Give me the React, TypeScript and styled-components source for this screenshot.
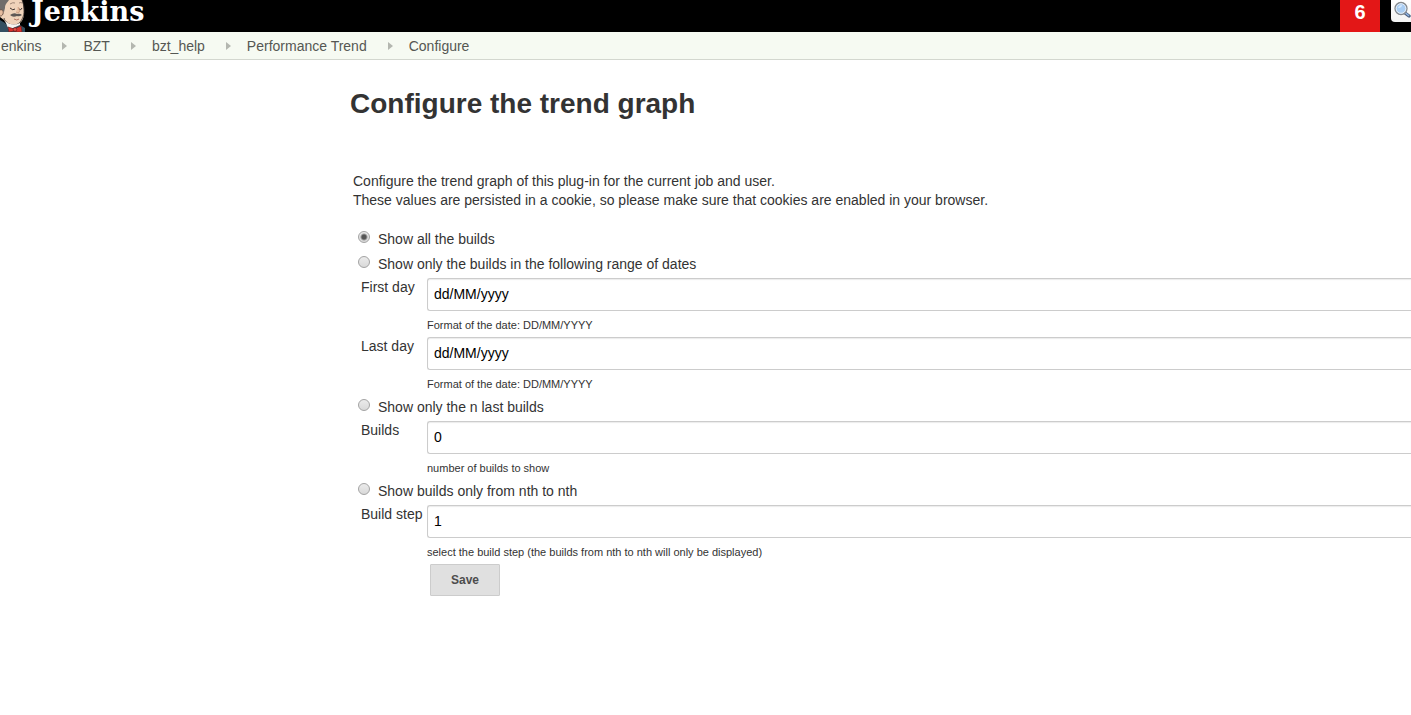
import React from "react";
import styled, { createGlobalStyle } from "styled-components";

const GlobalStyle = createGlobalStyle`
  * { box-sizing: border-box; }
  body {
    margin: 0;
    background: #fff;
    color: #333;
    font: 14px/19px "Liberation Sans", Arial, sans-serif;
    overflow-x: hidden;
  }
`;

const Header = styled.header`
  display: flex;
  justify-content: space-between;
  height: 32px;
  background: #000;
`;

const Logo = styled.a`
  display: flex;
  gap: 6px;
  color: #fff;
  text-decoration: none;
  font: bold 27px/24px "DejaVu Serif", serif;
`;

const Tools = styled.div`
  display: flex;
  gap: 11px;
`;

const Alert = styled.a`
  width: 40px;
  background: #e31717;
  color: #fff;
  font-size: 20px;
  font-weight: bold;
  line-height: 24px;
  text-align: center;
  text-decoration: none;
`;

const SearchButton = styled.button`
  width: 20px;
  height: 22px;
  padding: 0 0 0 2px;
  border: 0;
  border-radius: 0 0 0 4px;
  background: linear-gradient(#fff, #f4f4f4);
  overflow: hidden;
`;

const Crumbs = styled.ol`
  display: flex;
  align-items: center;
  height: 28px;
  margin: 0;
  padding: 1px 0 0 1px;
  list-style: none;
  background: #f6faf2;
  border-bottom: 1px solid #d3d7cf;
`;

const Crumb = styled.li`
  display: flex;
  align-items: center;
  & + &::before {
    content: "";
    margin: 0 16px 0 21px;
    border: solid transparent;
    border-width: 4px 0 4px 5px;
    border-left-color: #b4b7b0;
  }
`;

const CrumbLink = styled.a`
  color: #555753;
  line-height: 20px;
  text-decoration: none;
`;

const Main = styled.main`
  padding: 28px 0 40px 350px;
`;

const Title = styled.h1`
  margin: 0 0 52px;
  font-size: 28px;
  line-height: 32px;
`;

const Intro = styled.p`
  margin: 0 0 18px;
  padding-left: 3px;
`;

const Option = styled.label`
  display: flex;
  gap: 8px;
  height: 25px;
  padding: 2px 0 0 8px;
`;

const Radio = styled.input`
  appearance: none;
  width: 12px;
  height: 12px;
  margin: 1px 0 0;
  border: 1px solid #a3a3a3;
  border-radius: 50%;
  background: linear-gradient(#ebebeb, #d9d9d9);
  &:checked {
    background: radial-gradient(circle, #555 0 2px, transparent 4px),
      linear-gradient(#ebebeb, #d9d9d9);
  }
`;

const Field = styled.div`
  display: grid;
  grid-template-columns: 66px 1fr;
  height: 59px;
  padding-left: 11px;
`;

const TextInput = styled.input`
  display: block;
  width: 100%;
  height: 33px;
  padding: 0 6px 1px;
  border: 1px solid #ccc;
  border-right: 0;
  border-radius: 3px 0 0 3px;
  background: #fff;
  box-shadow: inset 0 1px 1px rgba(0, 0, 0, 0.08);
  color: #000;
  font: inherit;
`;

const Hint = styled.div`
  margin-top: 5px;
  font-size: 11px;
`;

const SaveButton = styled.button`
  display: block;
  width: 70px;
  height: 32px;
  margin-left: 80px;
  border: 1px solid #ccc;
  border-radius: 1px;
  background: #e0e0e0;
  color: #4d4d4d;
  font: bold 12px "Liberation Sans", Arial, sans-serif;
`;

const Butler = () => (
  <svg width="25" height="32" viewBox="0 0 25 32" aria-hidden="true">
    <path d="M0 20L5 23L9 27L20 25L25 28V32H0Z" fill="#335061" />
    <path d="M0 0H22C23 3 24 8 24 13C24 19 21 24 16 25C11 26 6 24 4 20L0 17Z" fill="#efd3ba" />
    <path d="M22 0C24 5 25 11 23 17C21 22 18 25 14 25C9 25 5 22 4 18" fill="none" stroke="#3e3531" strokeWidth="0.8" />
    <path d="M0 0H9C7 3 5 4 5 8L4 12L2 10L0 12Z" fill="#6f6d6b" />
    <path d="M0 10C2 9 4 11 3 14C2 16 1 16 0 16" fill="#e6bd9f" stroke="#5a443a" strokeWidth="0.8" />
    <path d="M10 4Q13 2 15 3M19 3Q21 2 22 3" fill="none" stroke="#8a7466" strokeWidth="0.8" />
    <path d="M10 8Q13 11 15 9M19 9Q21 11 22 8" fill="none" stroke="#3e3531" />
    <path d="M18 7Q21 12 18 13L16 12" fill="#e9c2a4" stroke="#c28e72" strokeWidth="0.7" />
    <path d="M10 15Q14 12 17 14Q20 13 22 15Q19 17 17 16Q13 18 10 15Z" fill="#5e5855" />
    <path d="M14 19Q17 21 19 19" fill="none" stroke="#a45c4c" strokeWidth="0.8" />
    <path d="M5 21L9 30L13 28L20 25V23Q12 27 5 21Z" fill="#f6f4f0" />
    <path d="M8 27L14 29L21 26L22 32H17L14 31L9 32Z" fill="#d8322d" stroke="#6d201d" strokeWidth="0.7" />
    <circle cx="15" cy="29.5" r="1.8" fill="#e24c45" stroke="#6d201d" strokeWidth="0.7" />
  </svg>
);

const Magnifier = () => (
  <svg width="18" height="22" viewBox="0 0 18 22" aria-hidden="true">
    <path d="M12 13L16 16" stroke="#4e6282" strokeWidth="3.4" strokeLinecap="round" />
    <path d="M12.5 13L15.5 15.5" stroke="#8fb5e4" strokeWidth="1.5" strokeLinecap="round" />
    <circle cx="8" cy="8.5" r="6" fill="#a9cdf3" stroke="#85888c" strokeWidth="1.3" />
    <circle cx="8" cy="8.5" r="4.8" fill="none" stroke="#e5edf5" />
    <path d="M5 8Q6 5 9 5Q9 8 5 8Z" fill="#d7e9fc" />
  </svg>
);

interface EntryProps {
  id: string;
  label: string;
  value: string;
  hint: string;
}

const Entry = ({ id, label, value, hint }: EntryProps) => (
  <Field>
    <label htmlFor={id}>{label}</label>
    <div>
      <TextInput id={id} type="text" defaultValue={value} aria-describedby={`${id}-hint`} />
      <Hint id={`${id}-hint`}>{hint}</Hint>
    </div>
  </Field>
);

const Choice = ({ text, checked }: { text: string; checked?: boolean }) => (
  <Option>
    <Radio type="radio" name="range" defaultChecked={checked} />
    {text}
  </Option>
);

const crumbs = ["enkins", "BZT", "bzt_help", "Performance Trend", "Configure"];

export default function App() {
  return (
    <>
      <GlobalStyle />
      <Header>
        <Logo href="#">
          <Butler />
          Jenkins
        </Logo>
        <Tools>
          <Alert href="#">6</Alert>
          <SearchButton type="button" aria-label="Search">
            <Magnifier />
          </SearchButton>
        </Tools>
      </Header>
      <nav aria-label="Breadcrumb">
        <Crumbs>
          {crumbs.map((name) => (
            <Crumb key={name}>
              <CrumbLink href="#">{name}</CrumbLink>
            </Crumb>
          ))}
        </Crumbs>
      </nav>
      <Main>
        <Title>Configure the trend graph</Title>
        <Intro>
          Configure the trend graph of this plug-in for the current job and user.
          <br />
          These values are persisted in a cookie, so please make sure that cookies are enabled in your browser.
        </Intro>
        <form onSubmit={(event) => event.preventDefault()}>
          <Choice text="Show all the builds" checked />
          <Choice text="Show only the builds in the following range of dates" />
          <Entry id="first-day" label="First day" value="dd/MM/yyyy" hint="Format of the date: DD/MM/YYYY" />
          <Entry id="last-day" label="Last day" value="dd/MM/yyyy" hint="Format of the date: DD/MM/YYYY" />
          <Choice text="Show only the n last builds" />
          <Entry id="builds" label="Builds" value="0" hint="number of builds to show" />
          <Choice text="Show builds only from nth to nth" />
          <Entry
            id="build-step"
            label="Build step"
            value="1"
            hint="select the build step (the builds from nth to nth will only be displayed)"
          />
          <SaveButton type="submit">Save</SaveButton>
        </form>
      </Main>
    </>
  );
}
